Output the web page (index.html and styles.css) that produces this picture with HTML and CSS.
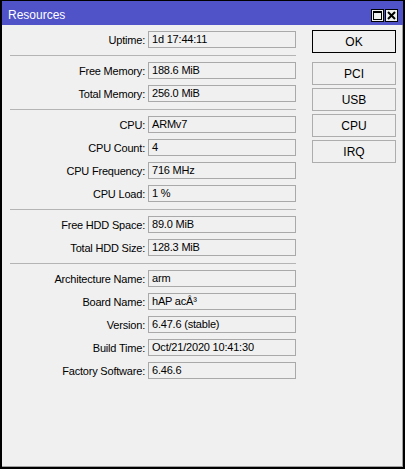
FILE: index.html
```html
<!DOCTYPE html>
<html lang="en">
<head>
    <meta charset="UTF-8">
    <title>Resources</title>
    <link rel="stylesheet" href="styles.css">
</head>
<body>
    <div class="window">
        <div class="titlebar">
            <span class="title">Resources</span>
            <div class="title-buttons">
                <span class="tbtn">
                    <svg width="11" height="11" viewBox="0 0 11 11"><rect x="1.5" y="1.5" width="8" height="8" fill="none" stroke="#000" stroke-width="1"/><line x1="1" y1="2" x2="10" y2="2" stroke="#000" stroke-width="2"/></svg>
                </span>
                <span class="tbtn">
                    <svg width="11" height="11" viewBox="0 0 11 11"><path d="M2 2 L9 9 M9 2 L2 9" stroke="#000" stroke-width="2"/></svg>
                </span>
            </div>
        </div>

        <div class="content">
            <div class="fields">
                <div class="row"><label>Uptime:</label><div class="value">1d 17:44:11</div></div>
                <div class="sep"></div>
                <div class="row"><label>Free Memory:</label><div class="value">188.6 MiB</div></div>
                <div class="row"><label>Total Memory:</label><div class="value">256.0 MiB</div></div>
                <div class="sep"></div>
                <div class="row"><label>CPU:</label><div class="value">ARMv7</div></div>
                <div class="row"><label>CPU Count:</label><div class="value">4</div></div>
                <div class="row"><label>CPU Frequency:</label><div class="value">716 MHz</div></div>
                <div class="row"><label>CPU Load:</label><div class="value">1 %</div></div>
                <div class="sep"></div>
                <div class="row"><label>Free HDD Space:</label><div class="value">89.0 MiB</div></div>
                <div class="row"><label>Total HDD Size:</label><div class="value">128.3 MiB</div></div>
                <div class="sep"></div>
                <div class="row"><label>Architecture Name:</label><div class="value">arm</div></div>
                <div class="row"><label>Board Name:</label><div class="value">hAP acÂ³</div></div>
                <div class="row"><label>Version:</label><div class="value">6.47.6 (stable)</div></div>
                <div class="row"><label>Build Time:</label><div class="value">Oct/21/2020 10:41:30</div></div>
                <div class="row"><label>Factory Software:</label><div class="value">6.46.6</div></div>
            </div>

            <div class="buttons">
                <button class="btn default">OK</button>
                <button class="btn">PCI</button>
                <button class="btn">USB</button>
                <button class="btn">CPU</button>
                <button class="btn">IRQ</button>
            </div>
        </div>
    </div>
</body>
</html>
```

FILE: styles.css
```css
* {
    margin: 0;
    padding: 0;
    box-sizing: border-box;
}

body {
    background: #fff;
    font-family: 'Liberation Sans', Arial, sans-serif;
    font-size: 11px;
    color: #000;
}

.window {
    width: 405px;
    height: 469px;
    border: 2px solid #000;
    border-top-width: 1px;
    background: #f0f0f0;
    box-shadow: inset -1px -1px 0 #a0a0a0;
    display: flex;
    flex-direction: column;
}

.titlebar {
    height: 24px;
    padding: 4px 5px 0 6px;
    background: #5052c8;
    color: #fff;
    display: flex;
    align-items: center;
    justify-content: space-between;
}

.title {
    font-size: 12px;
}

.title-buttons {
    display: flex;
    gap: 1px;
}

.tbtn {
    width: 13px;
    height: 13px;
    background: #f0f0f0;
    border: 1px solid #000;
    display: flex;
    align-items: center;
    justify-content: center;
}

.tbtn svg {
    display: block;
}

.content {
    display: flex;
    padding: 6px 0 0 8px;
}

.fields {
    width: 286px;
    display: flex;
    flex-direction: column;
    gap: 6px;
}

.row {
    display: flex;
    align-items: center;
    height: 17px;
    letter-spacing: -0.2px;
}

.row label {
    width: 135px;
    margin-right: 3px;
    text-align: right;
    white-space: nowrap;
}

.value {
    width: 148px;
    height: 17px;
    line-height: 15px;
    padding-left: 3px;
    border: 1px solid #a9a9a9;
    background: #f0f0f0;
    white-space: nowrap;
}

.sep {
    height: 1px;
    margin-top: 1px;
    background: #b4b4b4;
}

.buttons {
    width: 84px;
    margin: -1px 0 0 16px;
    display: flex;
    flex-direction: column;
    gap: 3px;
}

.btn {
    height: 23px;
    border: 1px solid #adadad;
    background: #f0f0f0;
    font-family: inherit;
    font-size: 12px;
    color: #000;
}

.btn.default {
    border-color: #000;
    margin-bottom: 6px;
}
```
